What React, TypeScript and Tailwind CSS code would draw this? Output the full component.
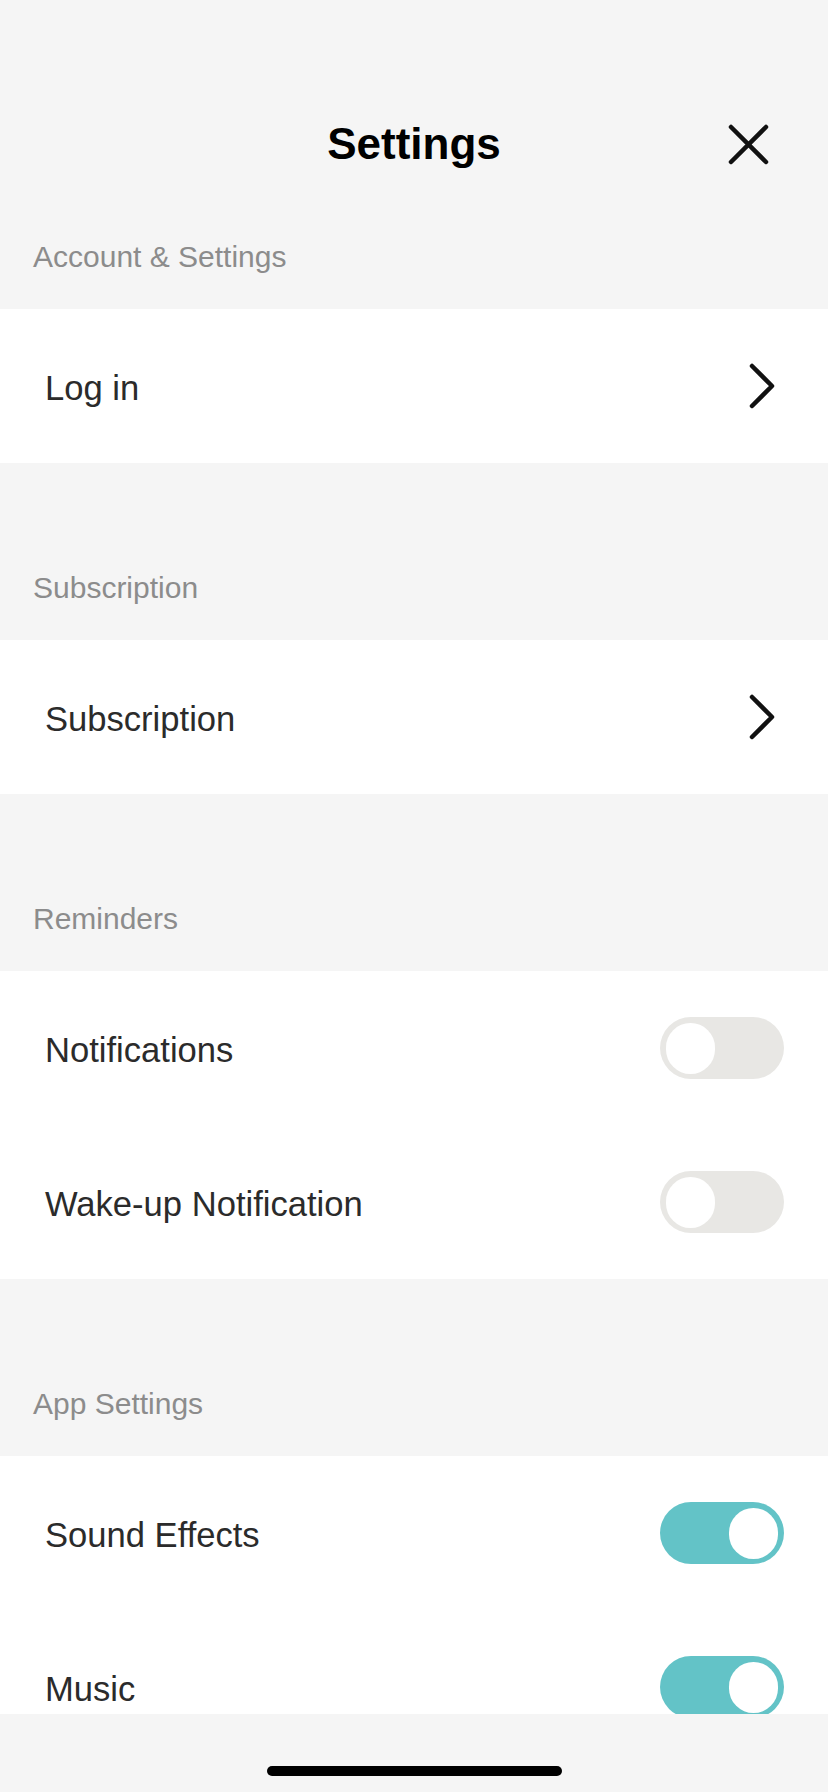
import React, { useState } from 'react';

const font = { fontFamily: '"Liberation Sans", Arial, Helvetica, sans-serif' };

const Chevron: React.FC = () => (
  <svg width="28" height="46" viewBox="0 0 28 46" fill="none">
    <polyline points="4,3 24,23 4,43" stroke="#111" strokeWidth="4.5" strokeLinecap="round" strokeLinejoin="round" />
  </svg>
);

const CloseIcon: React.FC = () => (
  <svg width="41" height="41" viewBox="0 0 41 41" fill="none">
    <path d="M3 3L38 38M38 3L3 38" stroke="#111" strokeWidth="4.5" strokeLinecap="round" />
  </svg>
);

const Toggle: React.FC<{ on: boolean; onChange: () => void }> = ({ on, onChange }) => (
  <button
    onClick={onChange}
    className={`flex h-[62px] w-[124px] shrink-0 items-center rounded-full px-[6px] ${
      on ? 'justify-end bg-[#63c3c7]' : 'justify-start bg-[#e8e7e4]'
    }`}
  >
    <span className="block h-[51px] w-[49px] rounded-full bg-white" />
  </button>
);

const SectionLabel: React.FC<{ title: string }> = ({ title }) => (
  <div className="pl-[33px] pt-[107px] pb-[34px]">
    <p className="text-[30px] leading-[36px] text-[#8c8c8c]">{title}</p>
  </div>
);

const LinkRow: React.FC<{ label: string }> = ({ label }) => (
  <div className="flex h-[154px] items-center justify-between bg-white pl-[45px] pr-[52px]">
    <span className="pt-[3px] text-[34.6px] leading-[40px] text-[#2b2b2b]">{label}</span>
    <Chevron />
  </div>
);

const ToggleRow: React.FC<{ label: string; on: boolean; onChange: () => void }> = ({ label, on, onChange }) => (
  <div className="flex h-[154px] shrink-0 items-center justify-between bg-white pl-[45px] pr-[44px]">
    <span className="pt-[3px] text-[34.6px] leading-[40px] text-[#2b2b2b]">{label}</span>
    <Toggle on={on} onChange={onChange} />
  </div>
);

export default function App() {
  const [notifications, setNotifications] = useState(false);
  const [wakeUp, setWakeUp] = useState(false);
  const [sound, setSound] = useState(true);
  const [music, setMusic] = useState(true);

  return (
    <div className="flex h-[1792px] w-[828px] flex-col overflow-hidden bg-[#f5f5f5]" style={font}>
      <div className="flex-1 overflow-hidden">
        {/* Header */}
        <div className="grid grid-cols-[1fr_auto_1fr] items-center pt-[119px]">
          <div />
          <h1 className="text-[44px] font-bold leading-[50px] text-black">Settings</h1>
          <div className="flex justify-end pr-[59px]">
            <button>
              <CloseIcon />
            </button>
          </div>
        </div>

        <div className="pl-[33px] pt-[70px] pb-[34px]">
          <p className="text-[30px] leading-[36px] text-[#8c8c8c]">Account &amp; Settings</p>
        </div>
        <LinkRow label="Log in" />

        <SectionLabel title="Subscription" />
        <LinkRow label="Subscription" />

        <SectionLabel title="Reminders" />
        <div className="flex flex-col">
          <ToggleRow label="Notifications" on={notifications} onChange={() => setNotifications(!notifications)} />
          <ToggleRow label="Wake-up Notification" on={wakeUp} onChange={() => setWakeUp(!wakeUp)} />
        </div>

        <SectionLabel title="App Settings" />
        <div className="flex flex-col">
          <ToggleRow label="Sound Effects" on={sound} onChange={() => setSound(!sound)} />
          <ToggleRow label="Music" on={music} onChange={() => setMusic(!music)} />
        </div>
      </div>

      {/* Home indicator */}
      <div className="flex h-[78px] shrink-0 justify-center bg-[#f5f5f5] pt-[52px]">
        <div className="h-[10px] w-[295px] rounded-full bg-black" />
      </div>
    </div>
  );
}
